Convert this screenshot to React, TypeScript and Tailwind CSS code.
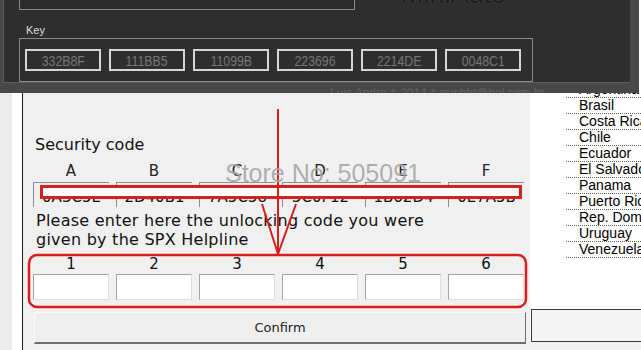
const keyCodes = ["332B8F", "111BB5", "11099B", "223696", "2214DE", "0048C1"];
const securityCodes = ["0A3C5E", "2D40B1", "7A5C38", "3C0F12", "1B62D4", "0E7A5B"];
const letters = ["A", "B", "C", "D", "E", "F"];
const countries = [
  "Argentina",
  "Brasil",
  "Costa Rica",
  "Chile",
  "Ecuador",
  "El Salvador",
  "Panama",
  "Puerto Rico",
  "Rep. Dominicana",
  "Uruguay",
  "Venezuela",
];

function DarkWindow() {
  return (
    <div className="absolute left-0 top-0 h-[93px] w-[639px] overflow-hidden bg-[#484848] pl-[3px] pr-[9px] font-['Liberation_Sans',Arial,sans-serif]">
      <div className="h-[83px] border-b border-l border-[#5e5e5e] bg-[#2e2e2e]">
        <div className="flex h-[10px] overflow-hidden">
          <div className="ml-[15px] h-[10px] w-[336px] shrink-0 border-x border-b border-[#8a8a8a] bg-[#2b2b2b]" />
          <div className="ml-[46px] h-[10px] shrink-0 overflow-hidden">
            <div className="mt-[-19px] text-[27px] leading-[27px] text-[#1c1c1c] [text-shadow:0_0_2px_#4a4a4a]">
              MiniAuto
            </div>
          </div>
        </div>
        <div className="ml-[22px] mt-[14px] text-[11px] leading-[13px] text-[#dcdcdc]">Key</div>
        <div className="ml-[15px] mt-[1px] h-[44px] w-[514px] border border-[#8a8a8a] pl-[5px] pt-[10px]">
          <div className="flex gap-[8px]">
            {keyCodes.map((c) => (
              <div
                key={c}
                className="flex h-[22px] w-[76px] shrink-0 items-center justify-center border-2 border-[#d6d6d6] bg-[#2e2e2e]"
              >
                <span className="scale-x-[0.82] text-[15px] leading-none text-[#777]">{c}</span>
              </div>
            ))}
          </div>
        </div>
      </div>
      <div className="absolute left-[330px] top-[86px] whitespace-nowrap text-[12px] leading-[14px] text-[#626262]">
        Luis Andre ‡ 2014 ‡ pushfd@bol.com.br
      </div>
    </div>
  );
}

function Annotations() {
  const red = "#d81f1d";
  return (
    <svg className="pointer-events-none absolute left-0 top-0" width="641" height="350">
      <rect x="41.5" y="186.5" width="479" height="11" fill="#ffffff" stroke={red} strokeWidth="3" />
      <rect x="29" y="255" width="497" height="52" rx="8" fill="none" stroke={red} strokeWidth="2.5" />
      <line x1="278" y1="109" x2="278" y2="254" stroke={red} strokeWidth="2" />
      <line x1="262" y1="204" x2="278" y2="254" stroke={red} strokeWidth="2" />
      <line x1="296" y1="204" x2="278" y2="254" stroke={red} strokeWidth="2" />
    </svg>
  );
}

export default function App() {
  return (
    <div className="relative flex h-[350px] w-[641px] overflow-hidden bg-white text-[#111]">
      <div className="w-[12px] shrink-0 bg-[#ececec]" />
      <div className="w-[10px] shrink-0 bg-white" />
      <div className="w-[1px] shrink-0 bg-[#1a1a1a]" />

      <div className="w-[507px] shrink-0 bg-[#f0f0f0] pl-[10px] pt-[135px] font-['DejaVu_Sans',Verdana,sans-serif]">
        <div className="pl-[2px] text-[16px] leading-[19px]">Security code</div>

        <div className="mt-[8px] flex gap-[7px]">
          {letters.map((l) => (
            <div key={l} className="w-[76px] shrink-0 text-center text-[15px] leading-[18px] text-[#222]">
              {l}
            </div>
          ))}
        </div>
        <div className="mt-[2px] flex gap-[7px]">
          {securityCodes.map((c) => (
            <div
              key={c}
              className="h-[25px] w-[76px] shrink-0 overflow-hidden border-l border-t border-[#8c8c8c] pt-[5px] text-center text-[15px] leading-[18px]"
            >
              {c}
            </div>
          ))}
        </div>

        <p className="mt-[4px] pl-[3px] text-[16px] leading-[19px] tracking-[0.25px]">
          Please enter here the unlocking code you were
          <br />
          given by the SPX Helpline
        </p>

        <div className="mt-[6px] flex gap-[7px]">
          {[1, 2, 3, 4, 5, 6].map((n) => (
            <div key={n} className="w-[76px] shrink-0 text-center text-[15px] leading-[18px]">
              {n}
            </div>
          ))}
        </div>
        <div className="mt-[1px] flex gap-[7px]">
          {[1, 2, 3, 4, 5, 6].map((n) => (
            <div
              key={n}
              className="h-[26px] w-[76px] shrink-0 border-b border-l border-r border-t border-b-[#dedede] border-l-[#a3a3a3] border-r-[#dedede] border-t-[#a3a3a3] bg-white"
            />
          ))}
        </div>

        <button className="ml-[1px] mt-[12px] flex h-[32px] w-[492px] items-center justify-center border-b-2 border-l border-r border-t border-b-[#6e6e6e] border-l-[#fafafa] border-r-[#6e6e6e] border-t-[#fafafa] bg-[#efefef] text-[13px] text-[#222]">
          Confirm
        </button>
      </div>

      <div className="flex min-w-0 flex-1 flex-col bg-white font-['Liberation_Sans',Arial,sans-serif]">
        <div className="ml-[36px] mt-[82px]">
          {countries.map((c) => (
            <div
              key={c}
              className="h-[16px] overflow-hidden whitespace-nowrap border-b border-dotted border-[#666] pl-[13px] text-[14px] leading-[15px] text-black"
            >
              {c}
            </div>
          ))}
        </div>
        <div className="ml-[1px] mt-auto h-[33px] border-b border-l border-t border-[#3a3a3a] bg-[#f4f4f4]" />
        <div className="h-[8px] bg-[#f0f0f0]" />
      </div>

      <Annotations />

      <div className="pointer-events-none absolute left-[225px] top-[161px] whitespace-nowrap font-['Liberation_Sans',Arial,sans-serif] text-[25px] leading-[25px] text-[rgba(105,105,105,0.55)] [text-shadow:0_0_1px_rgba(255,255,255,0.8)]">
        Store No: 505091
      </div>

      <DarkWindow />
    </div>
  );
}
